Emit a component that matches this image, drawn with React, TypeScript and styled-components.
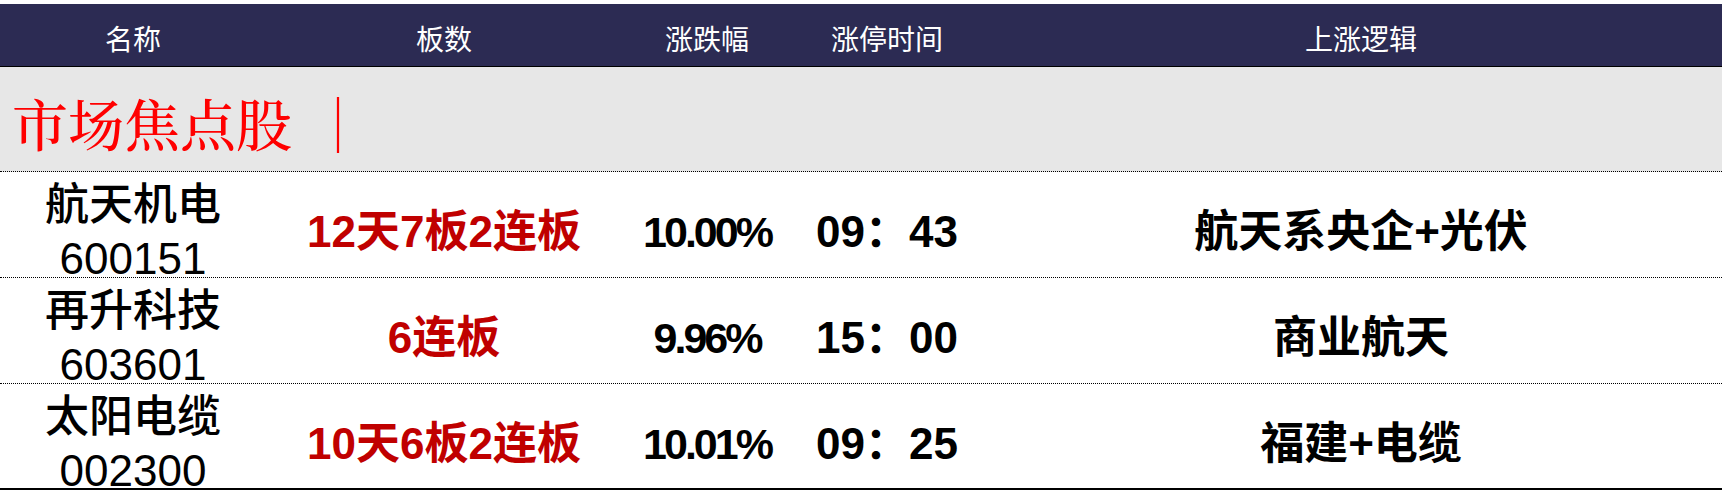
import React from 'react'
import styled, { createGlobalStyle } from 'styled-components'

const GlobalStyle = createGlobalStyle`
  html, body {
    margin: 0;
    padding: 0;
    background: #ffffff;
  }
  body {
    font-family: "Liberation Sans", "Noto Sans CJK SC", sans-serif;
  }
`

/* column tracks, shared by header and rows */
const COLS = '266px 356px 170px 190px 1fr'

interface Stock {
    name: string,
    code: string,
    boards: string,
    change: string,
    time: string,
    logic: string,
}

const rows: Stock[] = [
    { name: '航天机电', code: '600151', boards: '12天7板2连板', change: '10.00%', time: '09：43', logic: '航天系央企+光伏' },
    { name: '再升科技', code: '603601', boards: '6连板', change: '9.96%', time: '15：00', logic: '商业航天' },
    { name: '太阳电缆', code: '002300', boards: '10天6板2连板', change: '10.01%', time: '09：25', logic: '福建+电缆' },
]

const Table = styled.div`
  width: 1722px;
  padding-top: 4px;
`

const Head = styled.div`
  display: grid;
  grid-template-columns: ${COLS};
  align-items: center;
  height: 62px;
  background: #2c2b53;
  border-bottom: 1px solid #000;
  color: #ffffff;
  font-size: 28px;
`

const Band = styled.div`
  display: flex;
  align-items: center;
  height: 105px;
  padding-left: 12px;
  background: #e7e7e7;
  border-bottom: 1px dotted #000;
  box-sizing: border-box;
`

const Title = styled.span`
  margin-top: 6px;
  color: #ff0000;
  font-family: "Noto Serif CJK SC", "Liberation Serif", "Noto Sans CJK SC", serif;
  font-size: 56px;
  font-weight: 500;
`

const Bar = styled.span`
  margin-left: 18px;
`

const Row = styled.div<{ $last?: boolean }>`
  display: grid;
  grid-template-columns: ${COLS};
  height: 106px;
  box-sizing: border-box;
  border-bottom: ${p => (p.$last ? '2px solid #000' : '1px dotted #000')};
`

const Cell = styled.div<{ $pl?: number }>`
  display: flex;
  flex-direction: column;
  align-items: center;
  justify-content: center;
  padding: 6px 0 0 ${p => p.$pl || 0}px;
  text-align: center;
  white-space: nowrap;
`

const Line = styled.span<{ $color?: string, $weight?: number, $tight?: boolean }>`
  font-size: ${p => (p.$tight ? 43 : 44)}px;
  line-height: 54px;
  color: ${p => p.$color || '#000'};
  font-weight: ${p => p.$weight || 700};
  letter-spacing: ${p => (p.$tight ? '-3px' : '0')};
`

const App = () => {
    return (
        <Table>
            <GlobalStyle />
            <Head>
                <Cell>名称</Cell>
                <Cell>板数</Cell>
                <Cell>涨跌幅</Cell>
                <Cell>涨停时间</Cell>
                <Cell $pl={18}>上涨逻辑</Cell>
            </Head>
            <Band>
                <Title>市场焦点股<Bar>｜</Bar></Title>
            </Band>
            {rows.map((r, i) => (
                <Row key={r.code} $last={i === rows.length - 1}>
                    <Cell>
                        <Line $weight={500}>{r.name}</Line>
                        <Line $weight={400}>{r.code}</Line>
                    </Cell>
                    <Cell><Line $color="#c00000">{r.boards}</Line></Cell>
                    <Cell><Line $tight>{r.change}</Line></Cell>
                    <Cell><Line>{r.time}</Line></Cell>
                    <Cell $pl={18}><Line>{r.logic}</Line></Cell>
                </Row>
            ))}
        </Table>
    )
}

export default App
